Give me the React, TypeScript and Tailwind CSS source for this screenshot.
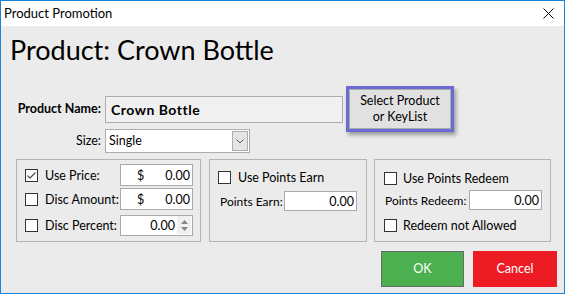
import React from "react";

// ---------------------------------------------------------------------------
// Small WinForms-like controls
// ---------------------------------------------------------------------------

const FONT = { fontFamily: '"Segoe UI", Lato, "Noto Sans", sans-serif' };

function CheckBox({ checked = false }: { checked?: boolean }) {
  return (
    <span className="inline-flex h-[13px] w-[13px] shrink-0 items-center justify-center border border-[#333333] bg-white">
      {checked && (
        <svg width="11" height="11" viewBox="0 0 11 11">
          <path d="M1.5 5.5 L4 8 L9.5 2.5" fill="none" stroke="#555555" strokeWidth="1.3" />
        </svg>
      )}
    </span>
  );
}

function NumberBox({
  value,
  dollar,
  spin,
  height = 22,
}: {
  value: string;
  dollar?: boolean;
  spin?: boolean;
  height?: number;
}) {
  return (
    <div
      className="flex w-[73px] shrink-0 items-center border border-[#a9a9a9] bg-white text-[12.5px] text-black"
      style={{ height }}
    >
      {dollar && <span className="pl-[16px]">$</span>}
      <span className="flex-1 pr-[2px] text-right">{value}</span>
      {spin && (
        <div className="mr-[1px] flex h-[18px] w-[14px] flex-col items-center justify-center gap-[3px] bg-[#f0f0f0]">
          <svg width="7" height="4" viewBox="0 0 7 4">
            <path d="M0 4 L3.5 0 L7 4 Z" fill="#888888" />
          </svg>
          <svg width="7" height="4" viewBox="0 0 7 4">
            <path d="M0 0 L3.5 4 L7 0 Z" fill="#888888" />
          </svg>
        </div>
      )}
    </div>
  );
}

// ---------------------------------------------------------------------------
// Dialog
// ---------------------------------------------------------------------------

export default function App() {
  return (
    <div
      className="flex h-[294px] w-[565px] flex-col overflow-hidden whitespace-nowrap border border-[#1883d7] bg-[#ebebeb] text-black"
      style={FONT}
    >
      {/* Title bar */}
      <div className="flex h-[25px] shrink-0 items-center justify-between bg-white pl-[3px] pr-[10px]">
        <span className="text-[13px]">Product Promotion</span>
        <svg width="11" height="11" viewBox="0 0 11 11">
          <path d="M0.5 0.5 L10.5 10.5 M10.5 0.5 L0.5 10.5" stroke="#000000" strokeWidth="1" />
        </svg>
      </div>

      {/* Heading */}
      <h1 className="mt-[7px] pl-[9px] text-[27px] leading-[34px]">Product: Crown Bottle</h1>

      {/* Name + size + select button */}
      <div className="mt-[19px] flex items-start">
        <div className="flex flex-col pt-[10px]">
          <div className="flex items-center">
            <span className="w-[100px] text-right text-[12.5px] font-bold">Product Name:</span>
            <div className="ml-[4px] flex h-[27px] w-[238px] items-center border border-[#adadad] bg-[#f0f0f0] pl-[5px] text-[14px] font-bold tracking-[0.5px]">
              Crown Bottle
            </div>
          </div>
          <div className="mt-[6px] flex items-center">
            <span className="w-[100px] text-right text-[12.5px]">Size:</span>
            <div className="ml-[4px] flex h-[24px] w-[145px] items-center justify-between border border-[#adadad] bg-white pl-[3px] pr-[1px] text-[12.5px]">
              <span>Single</span>
              <div className="flex h-[20px] w-[16px] items-center justify-center border border-[#adadad] bg-[#e5e5e5]">
                <svg width="8" height="5" viewBox="0 0 8 5">
                  <path d="M0.5 0.5 L4 4 L7.5 0.5" fill="none" stroke="#555555" strokeWidth="1" />
                </svg>
              </div>
            </div>
          </div>
        </div>
        <div className="ml-[3px] flex h-[46px] w-[108px] items-center justify-center border-[3px] border-[#6b6bd1] shadow-[2px_3px_4px_rgba(0,0,0,0.35)]">
          <div className="flex h-full w-full items-center justify-center border border-[#adadad] bg-[#e1e1e1] text-center text-[12.5px] leading-[16px]">
            Select Product
            <br />
            or KeyList
          </div>
        </div>
      </div>

      {/* Group boxes */}
      <div className="ml-[15px] mt-[6px] flex h-[83px] shrink-0 items-stretch gap-[8px] text-[12.5px] leading-[19px]">
        <div className="flex w-[185px] flex-col border border-[#b4b4b4] pl-[8px]">
          <div className="mt-[4px] flex h-[22px] items-center">
            <CheckBox checked />
            <span className="ml-[7px] w-[75px]">Use Price:</span>
            <NumberBox value="0.00" dollar />
          </div>
          <div className="mt-[2px] flex h-[22px] items-center">
            <CheckBox />
            <span className="ml-[7px] w-[75px]">Disc Amount:</span>
            <NumberBox value="0.00" dollar />
          </div>
          <div className="mt-[4px] flex h-[22px] items-center">
            <CheckBox />
            <span className="ml-[7px] w-[75px]">Disc Percent:</span>
            <NumberBox value="0.00" spin height={21} />
          </div>
        </div>

        <div className="flex w-[158px] flex-col border border-[#b4b4b4]">
          <div className="ml-[8px] mt-[8px] flex h-[19px] items-center">
            <CheckBox />
            <span className="ml-[7px]">Use Points Earn</span>
          </div>
          <div className="ml-[10px] mt-[4px] flex items-center">
            <span className="w-[64px] text-[12px]">Points Earn:</span>
            <NumberBox value="0.00" height={20} />
          </div>
        </div>

        <div className="ml-[-1px] flex w-[177px] flex-col border border-[#b4b4b4]">
          <div className="ml-[9px] mt-[9px] flex h-[19px] items-center">
            <CheckBox />
            <span className="ml-[6px]">Use Points Redeem</span>
          </div>
          <div className="ml-[10px] mt-[2px] flex items-center">
            <span className="w-[84px] text-[12px]">Points Redeem:</span>
            <NumberBox value="0.00" height={20} />
          </div>
          <div className="ml-[9px] mt-[6px] flex h-[19px] items-center">
            <CheckBox />
            <span className="ml-[6px]">Redeem not Allowed</span>
          </div>
        </div>
      </div>

      {/* OK / Cancel */}
      <div className="mr-[7px] mt-[9px] flex justify-end gap-[9px] text-[12.5px] text-white">
        <button className="h-[36px] w-[83px] border border-[#6a6a6a] bg-[#4caf50]">OK</button>
        <button className="h-[36px] w-[84px] bg-[#ed1c24]">Cancel</button>
      </div>
    </div>
  );
}
